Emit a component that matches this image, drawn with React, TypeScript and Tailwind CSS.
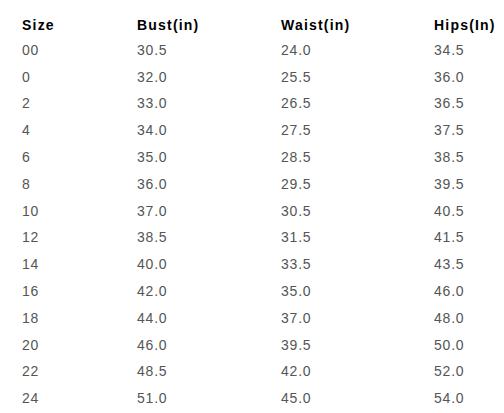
import React from 'react';

const rows: [string, string, string, string][] = [
  ['00', '30.5', '24.0', '34.5'],
  ['0', '32.0', '25.5', '36.0'],
  ['2', '33.0', '26.5', '36.5'],
  ['4', '34.0', '27.5', '37.5'],
  ['6', '35.0', '28.5', '38.5'],
  ['8', '36.0', '29.5', '39.5'],
  ['10', '37.0', '30.5', '40.5'],
  ['12', '38.5', '31.5', '41.5'],
  ['14', '40.0', '33.5', '43.5'],
  ['16', '42.0', '35.0', '46.0'],
  ['18', '44.0', '37.0', '48.0'],
  ['20', '46.0', '39.5', '50.0'],
  ['22', '48.5', '42.0', '52.0'],
  ['24', '51.0', '45.0', '54.0'],
];

const headers = ['Size', 'Bust(in)', 'Waist(in)', 'Hips(In)'];

const App: React.FC = () => {
  return (
    <div className="w-[504px] h-[413px] bg-white pl-[22px] pt-[13px] font-['Liberation_Sans',Arial,sans-serif] text-[14px]">
      <div className="grid grid-cols-[115px_144px_153px_1fr] h-[24px] items-center font-bold text-black tracking-[1.2px]">
        {headers.map((h) => (
          <div key={h}>{h}</div>
        ))}
      </div>
      {rows.map((r) => (
        <div
          key={r[0]}
          className="grid grid-cols-[115px_144px_153px_1fr] h-[26.8px] items-center text-[#555555] tracking-[0.8px]"
        >
          {r.map((c, i) => (
            <div key={i}>{c}</div>
          ))}
        </div>
      ))}
    </div>
  );
};

export default App;
